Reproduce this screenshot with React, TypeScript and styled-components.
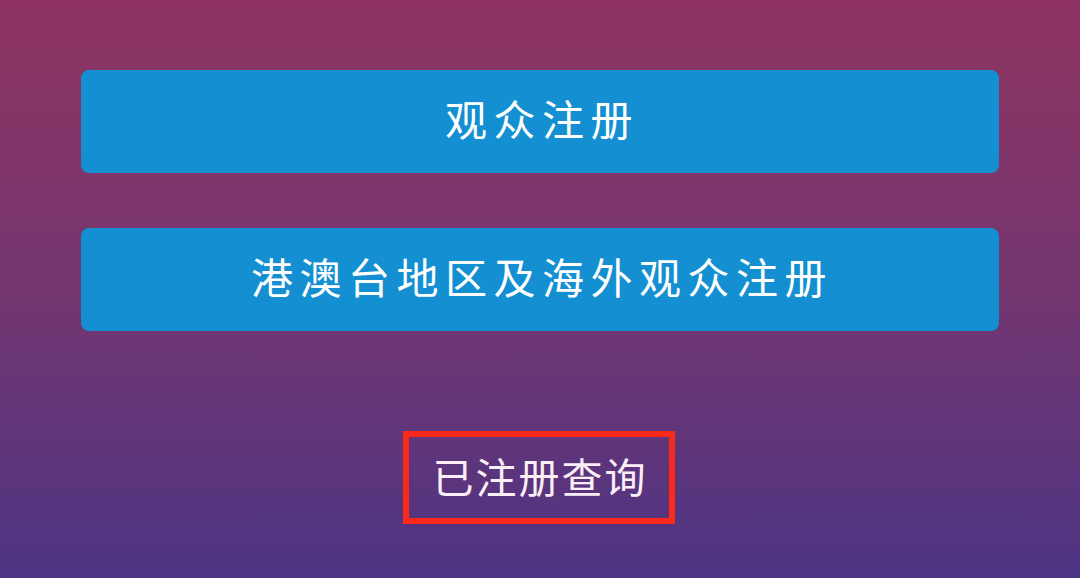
import React from "react";
import styled, { createGlobalStyle } from "styled-components";

const Global = createGlobalStyle`
  html, body { margin: 0; padding: 0; }
  body { font-family: "Noto Sans CJK SC", "Noto Sans", sans-serif; }
`;

const Page = styled.div`
  width: 1080px;
  height: 578px;
  box-sizing: border-box;
  padding: 70px 81px 0;
  background: linear-gradient(180deg, #8f3462 0%, #743670 50%, #4d3483 100%);
  display: flex;
  flex-direction: column;
  align-items: stretch;
  overflow: hidden;
`;

const RegButton = styled.div<{ $mt?: number }>`
  height: 103px;
  margin-top: ${(p) => p.$mt ?? 0}px;
  border-radius: 8px;
  background: #138fd2;
  color: #ffffff;
  display: flex;
  align-items: center;
  justify-content: center;
  font-size: 42px;
  letter-spacing: 6.5px;
  padding-left: 4px;
  padding-bottom: 7px;
  box-sizing: border-box;
  line-height: 1;
`;

const QueryBox = styled.div`
  align-self: center;
  margin-top: 100px;
  margin-left: -2px;
  width: 272px;
  height: 93px;
  box-sizing: border-box;
  border: 6px solid #fa2a1a;
  display: flex;
  align-items: center;
  justify-content: center;
  color: #fbeef6;
  font-size: 41px;
  letter-spacing: 2px;
  line-height: 1;
  padding-left: 2px;
  padding-bottom: 4px;
`;

export default function App() {
  return (
    <>
      <Global />
      <Page>
        <RegButton>观众注册</RegButton>
        <RegButton $mt={55}>港澳台地区及海外观众注册</RegButton>
        <QueryBox>已注册查询</QueryBox>
      </Page>
    </>
  );
}
